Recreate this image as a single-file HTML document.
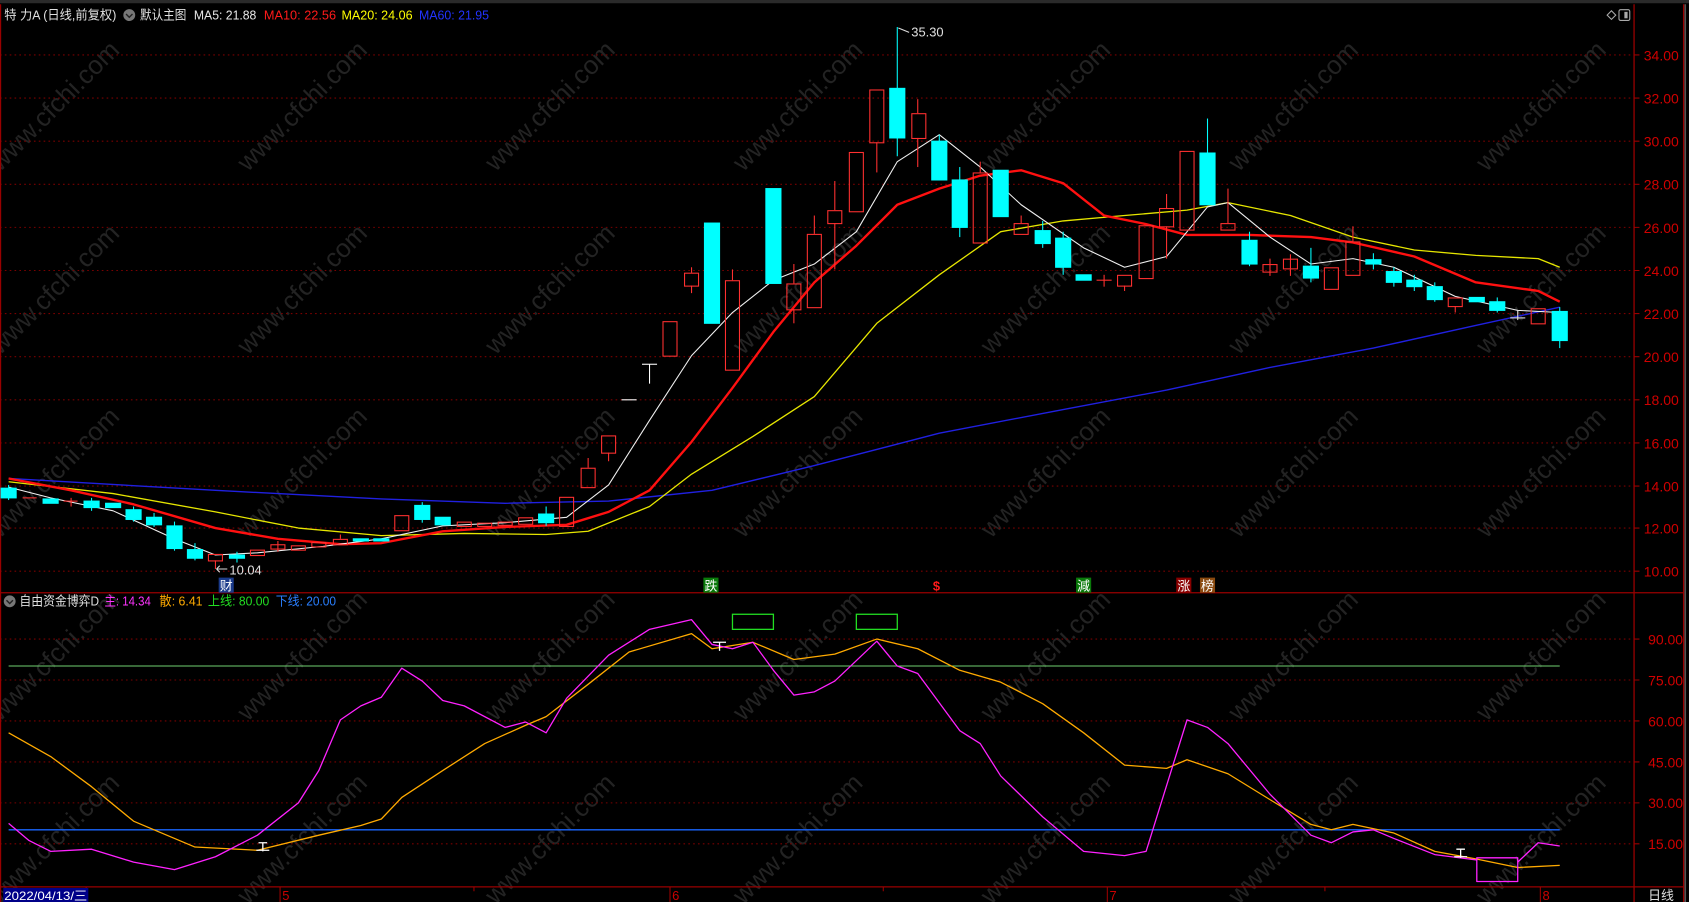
<!DOCTYPE html>
<html><head><meta charset="utf-8"><style>
html,body{margin:0;padding:0;background:#000;overflow:hidden}
svg{display:block}
text{font-family:"Liberation Sans","Noto Sans CJK SC",sans-serif}
</style></head><body>
<svg width="1689" height="902" viewBox="0 0 1568 837" preserveAspectRatio="none" xmlns="http://www.w3.org/2000/svg">
<rect width="1568" height="837" fill="#000"/>
<rect x="0" y="0" width="1568" height="3" fill="#2a2a2a"/>
<g fill="#232323" font-size="24" font-family="Liberation Sans,sans-serif">
<text transform="translate(0,160) rotate(-45)">www.cfchi.com</text>
<text transform="translate(230,160) rotate(-45)">www.cfchi.com</text>
<text transform="translate(460,160) rotate(-45)">www.cfchi.com</text>
<text transform="translate(690,160) rotate(-45)">www.cfchi.com</text>
<text transform="translate(920,160) rotate(-45)">www.cfchi.com</text>
<text transform="translate(1150,160) rotate(-45)">www.cfchi.com</text>
<text transform="translate(1380,160) rotate(-45)">www.cfchi.com</text>
<text transform="translate(0,330) rotate(-45)">www.cfchi.com</text>
<text transform="translate(230,330) rotate(-45)">www.cfchi.com</text>
<text transform="translate(460,330) rotate(-45)">www.cfchi.com</text>
<text transform="translate(690,330) rotate(-45)">www.cfchi.com</text>
<text transform="translate(920,330) rotate(-45)">www.cfchi.com</text>
<text transform="translate(1150,330) rotate(-45)">www.cfchi.com</text>
<text transform="translate(1380,330) rotate(-45)">www.cfchi.com</text>
<text transform="translate(0,500) rotate(-45)">www.cfchi.com</text>
<text transform="translate(230,500) rotate(-45)">www.cfchi.com</text>
<text transform="translate(460,500) rotate(-45)">www.cfchi.com</text>
<text transform="translate(690,500) rotate(-45)">www.cfchi.com</text>
<text transform="translate(920,500) rotate(-45)">www.cfchi.com</text>
<text transform="translate(1150,500) rotate(-45)">www.cfchi.com</text>
<text transform="translate(1380,500) rotate(-45)">www.cfchi.com</text>
<text transform="translate(0,670) rotate(-45)">www.cfchi.com</text>
<text transform="translate(230,670) rotate(-45)">www.cfchi.com</text>
<text transform="translate(460,670) rotate(-45)">www.cfchi.com</text>
<text transform="translate(690,670) rotate(-45)">www.cfchi.com</text>
<text transform="translate(920,670) rotate(-45)">www.cfchi.com</text>
<text transform="translate(1150,670) rotate(-45)">www.cfchi.com</text>
<text transform="translate(1380,670) rotate(-45)">www.cfchi.com</text>
<text transform="translate(0,840) rotate(-45)">www.cfchi.com</text>
<text transform="translate(230,840) rotate(-45)">www.cfchi.com</text>
<text transform="translate(460,840) rotate(-45)">www.cfchi.com</text>
<text transform="translate(690,840) rotate(-45)">www.cfchi.com</text>
<text transform="translate(920,840) rotate(-45)">www.cfchi.com</text>
<text transform="translate(1150,840) rotate(-45)">www.cfchi.com</text>
<text transform="translate(1380,840) rotate(-45)">www.cfchi.com</text>
</g>
<g stroke="#7a0000" stroke-width="1" stroke-dasharray="1.5,3">
<line x1="0" y1="51" x2="1517" y2="51"/><line x1="0" y1="91" x2="1517" y2="91"/><line x1="0" y1="131" x2="1517" y2="131"/><line x1="0" y1="171" x2="1517" y2="171"/><line x1="0" y1="211" x2="1517" y2="211"/><line x1="0" y1="251" x2="1517" y2="251"/><line x1="0" y1="291" x2="1517" y2="291"/><line x1="0" y1="331" x2="1517" y2="331"/><line x1="0" y1="371" x2="1517" y2="371"/><line x1="0" y1="411" x2="1517" y2="411"/><line x1="0" y1="451" x2="1517" y2="451"/><line x1="0" y1="490" x2="1517" y2="490"/><line x1="0" y1="530" x2="1517" y2="530"/>
<line x1="0" y1="593" x2="1517" y2="593"/><line x1="0" y1="631" x2="1517" y2="631"/><line x1="0" y1="669" x2="1517" y2="669"/><line x1="0" y1="707" x2="1517" y2="707"/><line x1="0" y1="745" x2="1517" y2="745"/><line x1="0" y1="783" x2="1517" y2="783"/>
</g>
<g stroke="#990000" stroke-width="1.2" fill="none">
<line x1="1517" y1="4" x2="1517" y2="837"/>
<line x1="0" y1="550" x2="1563" y2="550"/>
<line x1="0" y1="823" x2="1563" y2="823"/>
<line x1="1563" y1="4" x2="1563" y2="837"/>
<line x1="0.5" y1="4" x2="0.5" y2="837"/>
</g>
<line x1="1564.5" y1="4" x2="1564.5" y2="837" stroke="#555" stroke-width="1.5"/>
<g fill="#d00000" font-size="13">
<text x="1526" y="56">34.00</text><text x="1526" y="96">32.00</text><text x="1526" y="136">30.00</text><text x="1526" y="176">28.00</text><text x="1526" y="216">26.00</text><text x="1526" y="256">24.00</text><text x="1526" y="296">22.00</text><text x="1526" y="336">20.00</text><text x="1526" y="376">18.00</text><text x="1526" y="416">16.00</text><text x="1526" y="456">14.00</text><text x="1526" y="495">12.00</text><text x="1526" y="535">10.00</text>
<text x="1530" y="598">90.00</text><text x="1530" y="636">75.00</text><text x="1530" y="674">60.00</text><text x="1530" y="712">45.00</text><text x="1530" y="750">30.00</text><text x="1530" y="788">15.00</text>
</g>
<g stroke="#990000">
<path d="M1517 51h5M1517 91h5M1517 131h5M1517 171h5M1517 211h5M1517 251h5M1517 291h5M1517 331h5M1517 371h5M1517 411h5M1517 451h5M1517 490h5M1517 530h5M1517 593h5M1517 631h5M1517 669h5M1517 707h5M1517 745h5M1517 783h5"/>
</g>
<g font-size="12" lengthAdjust="spacingAndGlyphs">
<text x="4" y="18" fill="#e0e0e0" textLength="104" lengthAdjust="spacingAndGlyphs">特 力A (日线,前复权)</text>
<circle cx="120" cy="14" r="5.5" fill="#777"/><path d="M117 13l3 3 3-3" stroke="#222" stroke-width="1.3" fill="none"/>
<text x="130" y="18" fill="#e0e0e0" textLength="43" lengthAdjust="spacingAndGlyphs">默认主图</text>
<text x="180" y="18" fill="#e8e8e8" textLength="58" lengthAdjust="spacingAndGlyphs">MA5: 21.88</text>
<text x="245" y="18" fill="#ff1a1a" textLength="67" lengthAdjust="spacingAndGlyphs">MA10: 22.56</text>
<text x="317" y="18" fill="#ffff00" textLength="66" lengthAdjust="spacingAndGlyphs">MA20: 24.06</text>
<text x="389" y="18" fill="#2233ff" textLength="65" lengthAdjust="spacingAndGlyphs">MA60: 21.95</text>
</g>
<path d="M1496 10l4 4-4 4-4-4z" stroke="#aaa" fill="none"/>
<rect x="1503" y="9" width="10" height="10" rx="1.5" stroke="#aaa" fill="none"/><rect x="1508" y="11" width="3" height="6" fill="#aaa"/>
<g fill="none" stroke-linejoin="round">
<polyline stroke="#2020e0" stroke-width="1.3" points="8,444 200,455 354,463 469,467 565,465 661,455 756,432 872,402 987,380 1083,362 1179,341 1275,323 1370,302 1448,285"/>
<polyline stroke="#e6e600" stroke-width="1.2" points="8,447 105,458 200,475 277,490 354,497 431,495 507,496 546,493 603,470 642,440 699,405 756,368 814,300 872,255 929,215 987,205 1044,200 1102,195 1140,188 1198,200 1256,220 1313,232 1370,237 1428,240 1448,248"/>
<polyline stroke="#ff1010" stroke-width="2.2" points="8,444 66,455 124,468 200,490 258,500 316,505 354,504 411,493 469,489 526,487 565,475 603,455 642,410 680,360 718,308 756,262 795,228 833,190 872,175 910,163 948,158 987,170 1025,200 1064,208 1102,218 1160,218 1217,220 1256,225 1313,238 1370,262 1428,270 1448,280"/>
<polyline stroke="#f0f0f0" stroke-width="1" points="8,452 47,462 105,474 162,500 200,515 239,513 300,507 354,500 411,488 469,485 526,480 565,450 603,390 642,330 680,290 718,260 756,245 795,215 833,150 872,125 910,155 948,190 1006,230 1044,248 1083,238 1121,192 1140,188 1179,220 1217,245 1256,240 1294,248 1351,275 1409,288 1448,290"/>
</g>
<g fill="#00ffff" stroke="#00ffff" stroke-width="1">
<line x1="8" y1="450" x2="8" y2="464"/><rect x="1" y="453" width="14" height="9"/>
<rect x="40" y="463" width="14" height="4"/>
<rect x="78" y="465" width="14" height="6"/><line x1="85" y1="462" x2="85" y2="474"/>
<rect x="98" y="467" width="14" height="4"/>
<rect x="117" y="473" width="14" height="9"/><line x1="124" y1="470" x2="124" y2="484"/>
<rect x="136" y="480" width="14" height="7"/><line x1="143" y1="476" x2="143" y2="489"/>
<rect x="155" y="488" width="14" height="21"/><line x1="162" y1="484" x2="162" y2="511"/>
<rect x="174" y="510" width="14" height="8"/><line x1="181" y1="504" x2="181" y2="520"/>
<rect x="213" y="515" width="14" height="3"/><line x1="220" y1="512" x2="220" y2="522"/>
<rect x="328" y="500" width="14" height="2"/><rect x="347" y="500" width="14" height="2"/>
<rect x="385" y="469" width="14" height="13"/><line x1="392" y1="466" x2="392" y2="485"/>
<rect x="404" y="480" width="14" height="7"/>
<rect x="500" y="477" width="14" height="8"/><line x1="507" y1="470" x2="507" y2="488"/>
<rect x="654" y="207" width="14" height="93"/>
<rect x="711" y="175" width="14" height="88"/>
<rect x="826" y="82" width="14" height="46"/><line x1="833" y1="25" x2="833" y2="145"/>
<rect x="865" y="131" width="14" height="36"/><line x1="872" y1="125" x2="872" y2="167"/>
<rect x="884" y="167" width="14" height="44"/><line x1="891" y1="155" x2="891" y2="220"/>
<rect x="922" y="158" width="14" height="43"/>
<rect x="961" y="214" width="14" height="12"/><line x1="968" y1="205" x2="968" y2="230"/>
<rect x="980" y="221" width="14" height="27"/><line x1="987" y1="215" x2="987" y2="255"/>
<rect x="999" y="255" width="14" height="5"/>
<rect x="1114" y="142" width="14" height="48"/><line x1="1121" y1="110" x2="1121" y2="190"/>
<rect x="1153" y="223" width="14" height="22"/><line x1="1160" y1="215" x2="1160" y2="247"/>
<rect x="1210" y="247" width="14" height="11"/><line x1="1217" y1="230" x2="1217" y2="262"/>
<rect x="1268" y="241" width="14" height="4"/><line x1="1275" y1="235" x2="1275" y2="250"/>
<rect x="1287" y="252" width="14" height="10"/><line x1="1294" y1="248" x2="1294" y2="266"/>
<rect x="1306" y="260" width="14" height="6"/><line x1="1313" y1="255" x2="1313" y2="270"/>
<rect x="1325" y="266" width="14" height="12"/><line x1="1332" y1="262" x2="1332" y2="280"/>
<rect x="1364" y="276" width="14" height="4"/>
<rect x="1383" y="280" width="14" height="8"/><line x1="1390" y1="276" x2="1390" y2="290"/>
<rect x="1441" y="289" width="14" height="27"/><line x1="1448" y1="285" x2="1448" y2="323"/>
</g>
<g fill="none" stroke="#ff3030" stroke-width="1">
<line x1="21" y1="462" x2="34" y2="462"/>
<line x1="59" y1="465" x2="72" y2="465"/><line x1="66" y1="462" x2="66" y2="470"/>
<rect x="193.5" y="514.5" width="13" height="6"/><line x1="200" y1="520" x2="200" y2="528"/>
<rect x="232.5" y="510.5" width="13" height="5"/>
<rect x="251.5" y="505.5" width="13" height="4"/><line x1="258" y1="502" x2="258" y2="512"/>
<rect x="270.5" y="506.5" width="13" height="4"/>
<rect x="289.5" y="503.5" width="13" height="4"/>
<rect x="309.5" y="500.5" width="13" height="5"/><line x1="316" y1="496" x2="316" y2="500"/>
<rect x="366.5" y="478.5" width="13" height="14"/>
<rect x="424.5" y="484.5" width="13" height="4"/>
<rect x="443.5" y="485.5" width="13" height="3"/>
<rect x="462.5" y="484.5" width="13" height="3"/>
<rect x="481.5" y="480.5" width="13" height="6"/>
<rect x="519.5" y="461.5" width="13" height="27"/>
<rect x="539.5" y="434.5" width="13" height="18"/><line x1="546" y1="425" x2="546" y2="434"/>
<rect x="558.5" y="404.5" width="13" height="16"/><line x1="565" y1="420" x2="565" y2="428"/>
<line x1="577" y1="371" x2="591" y2="371" stroke="#fff"/>
<line x1="596" y1="338" x2="610" y2="338" stroke="#fff"/><line x1="603" y1="338" x2="603" y2="356" stroke="#fff"/>
<rect x="615.5" y="298.5" width="13" height="32"/>
<rect x="635.5" y="253.5" width="13" height="12"/><line x1="642" y1="248" x2="642" y2="253"/><line x1="642" y1="265" x2="642" y2="272"/>
<rect x="673.5" y="260.5" width="13" height="83"/><line x1="680" y1="250" x2="680" y2="260"/>
<rect x="730.5" y="263.5" width="13" height="24"/><line x1="737" y1="245" x2="737" y2="263"/><line x1="737" y1="287" x2="737" y2="300"/>
<rect x="749.5" y="217.5" width="13" height="68"/><line x1="756" y1="200" x2="756" y2="217"/>
<rect x="768.5" y="195.5" width="13" height="12"/><line x1="775" y1="168" x2="775" y2="195"/><line x1="775" y1="207" x2="775" y2="250"/>
<rect x="788.5" y="141.5" width="13" height="55"/>
<rect x="807.5" y="83.5" width="13" height="49"/><line x1="814" y1="132" x2="814" y2="160"/>
<rect x="846.5" y="105.5" width="13" height="23"/><line x1="852" y1="92" x2="852" y2="105"/><line x1="852" y1="128" x2="852" y2="155"/>
<rect x="903.5" y="160.5" width="13" height="65"/><line x1="910" y1="150" x2="910" y2="160"/>
<rect x="941.5" y="207.5" width="13" height="10"/><line x1="948" y1="200" x2="948" y2="207"/>
<line x1="1018" y1="260" x2="1032" y2="260"/><line x1="1025" y1="255" x2="1025" y2="266"/>
<rect x="1037.5" y="255.5" width="13" height="10"/><line x1="1044" y1="265" x2="1044" y2="270"/>
<rect x="1057.5" y="209.5" width="13" height="49"/>
<rect x="1076.5" y="193.5" width="13" height="17"/><line x1="1083" y1="180" x2="1083" y2="193"/><line x1="1083" y1="210" x2="1083" y2="240"/>
<rect x="1095.5" y="140.5" width="13" height="73"/>
<rect x="1133.5" y="207.5" width="13" height="6"/><line x1="1140" y1="175" x2="1140" y2="207"/>
<rect x="1172.5" y="245.5" width="13" height="7"/><line x1="1179" y1="240" x2="1179" y2="256"/>
<rect x="1191.5" y="240.5" width="13" height="9"/><line x1="1198" y1="236" x2="1198" y2="256"/>
<rect x="1229.5" y="248.5" width="13" height="20"/>
<rect x="1249.5" y="224.5" width="13" height="31"/><line x1="1256" y1="210" x2="1256" y2="224"/>
<rect x="1344.5" y="276.5" width="13" height="8"/><line x1="1351" y1="284" x2="1351" y2="290"/>
<line x1="1402" y1="295" x2="1416" y2="295" stroke="#ddd"/><line x1="1409" y1="288" x2="1409" y2="297" stroke="#ddd"/>
<rect x="1421.5" y="286.5" width="13" height="14"/>
</g>
<g font-size="12" fill="#e0e0e0">
<path d="M834 26l10 4" stroke="#ddd"/><text x="846" y="34">35.30</text>
<path d="M201 528h10M201 528l3-3M201 528l3 3" stroke="#ddd" fill="none"/><text x="213" y="533">10.04</text>
</g>
<g font-size="12">
<rect x="203" y="536" width="14" height="14" fill="#1a3a8a"/><text x="204" y="548" fill="#fff">财</text>
<rect x="653" y="536" width="14" height="14" fill="#0a7a0a"/><text x="654" y="548" fill="#fff">跌</text>
<text x="866" y="548" fill="#ff1a1a" font-weight="bold">$</text>
<rect x="999" y="536" width="14" height="14" fill="#0a7a0a"/><text x="1000" y="548" fill="#fff">減</text>
<rect x="1092" y="536" width="14" height="14" fill="#8a0000"/><text x="1093" y="548" fill="#fff">涨</text>
<rect x="1114" y="536" width="14" height="14" fill="#8a4a10"/><text x="1115" y="548" fill="#fff">榜</text>
</g>
<g font-size="12">
<circle cx="9" cy="558" r="5.5" fill="#777"/><path d="M6 557l3 3 3-3" stroke="#222" stroke-width="1.3" fill="none"/>
<text x="18" y="562" fill="#e0e0e0" textLength="74" lengthAdjust="spacingAndGlyphs">自由资金博弈D</text>
<text x="97" y="562" fill="#ff33ff" textLength="43" lengthAdjust="spacingAndGlyphs">主: 14.34</text>
<text x="148" y="562" fill="#ffaa00" textLength="40" lengthAdjust="spacingAndGlyphs">散: 6.41</text>
<text x="193" y="562" fill="#22dd22" textLength="57" lengthAdjust="spacingAndGlyphs">上线: 80.00</text>
<text x="256" y="562" fill="#2a7fff" textLength="56" lengthAdjust="spacingAndGlyphs">下线: 20.00</text>
</g>
<line x1="8" y1="618" x2="1448" y2="618" stroke="#6fd06f" stroke-width="1"/>
<line x1="8" y1="770" x2="1448" y2="770" stroke="#1a66ff" stroke-width="1.3"/>
<rect x="680" y="570" width="38" height="14" fill="none" stroke="#22dd22" stroke-width="1.2"/>
<rect x="795" y="570" width="38" height="14" fill="none" stroke="#22dd22" stroke-width="1.2"/>
<g fill="none" stroke-linejoin="round">
<polyline stroke="#ffaa00" stroke-width="1.2" points="8,680 47,702 85,730 124,762 181,786 239,789 296,775 335,766 354,760 373,740 411,715 450,690 488,673 507,665 546,635 584,605 642,588 661,602 699,596 737,612 775,607 814,593 852,602 891,622 929,633 968,653 1006,680 1044,710 1083,713 1102,705 1140,718 1179,742 1217,765 1236,770 1256,765 1294,773 1332,790 1370,797 1409,805 1448,803"/>
<polyline stroke="#ff22ff" stroke-width="1.2" points="8,764 27,780 47,790 85,788 124,800 162,807 200,795 239,775 277,745 296,715 316,668 335,655 354,647 373,620 392,632 411,650 431,655 469,675 488,670 507,680 526,648 565,608 603,584 642,575 661,598 680,602 699,596 718,622 737,645 756,642 775,632 814,595 833,618 852,625 891,678 910,690 929,720 968,758 1006,790 1044,794 1064,790 1102,668 1121,675 1140,690 1179,737 1217,775 1236,782 1256,772 1275,770 1294,778 1332,793 1371,798"/>
<rect x="1371" y="796" width="38" height="22" stroke="#ff22ff" stroke-width="1.2"/>
<polyline stroke="#ff22ff" stroke-width="1.2" points="1409,800 1428,782 1448,785"/>
</g>
<g stroke="#fff" stroke-width="1.2">
<path d="M238 789h12M244 782v8M240 782h8"/>
<path d="M662 596h12M668 596v8"/>
<path d="M1350 795h12M1356 788v8M1352 788h8"/>
</g>
<g stroke="#990000"><path d="M260 823v14M622 823v14M1028 823v14M1430 823v14M80 823v4M440 823v4M820 823v4M1230 823v4"/></g>
<g font-size="12" fill="#cc0000">
<text x="262" y="835">5</text><text x="624" y="835">6</text><text x="1030" y="835">7</text><text x="1432" y="835">8</text>
</g>
<rect x="3" y="824" width="79" height="13" fill="#000088"/>
<text x="4" y="835" font-size="11.5" fill="#fff" textLength="77" lengthAdjust="spacingAndGlyphs">2022/04/13/三</text>
<text x="1530" y="835" font-size="12" fill="#e0e0e0">日线</text>
</svg>
</body></html>
